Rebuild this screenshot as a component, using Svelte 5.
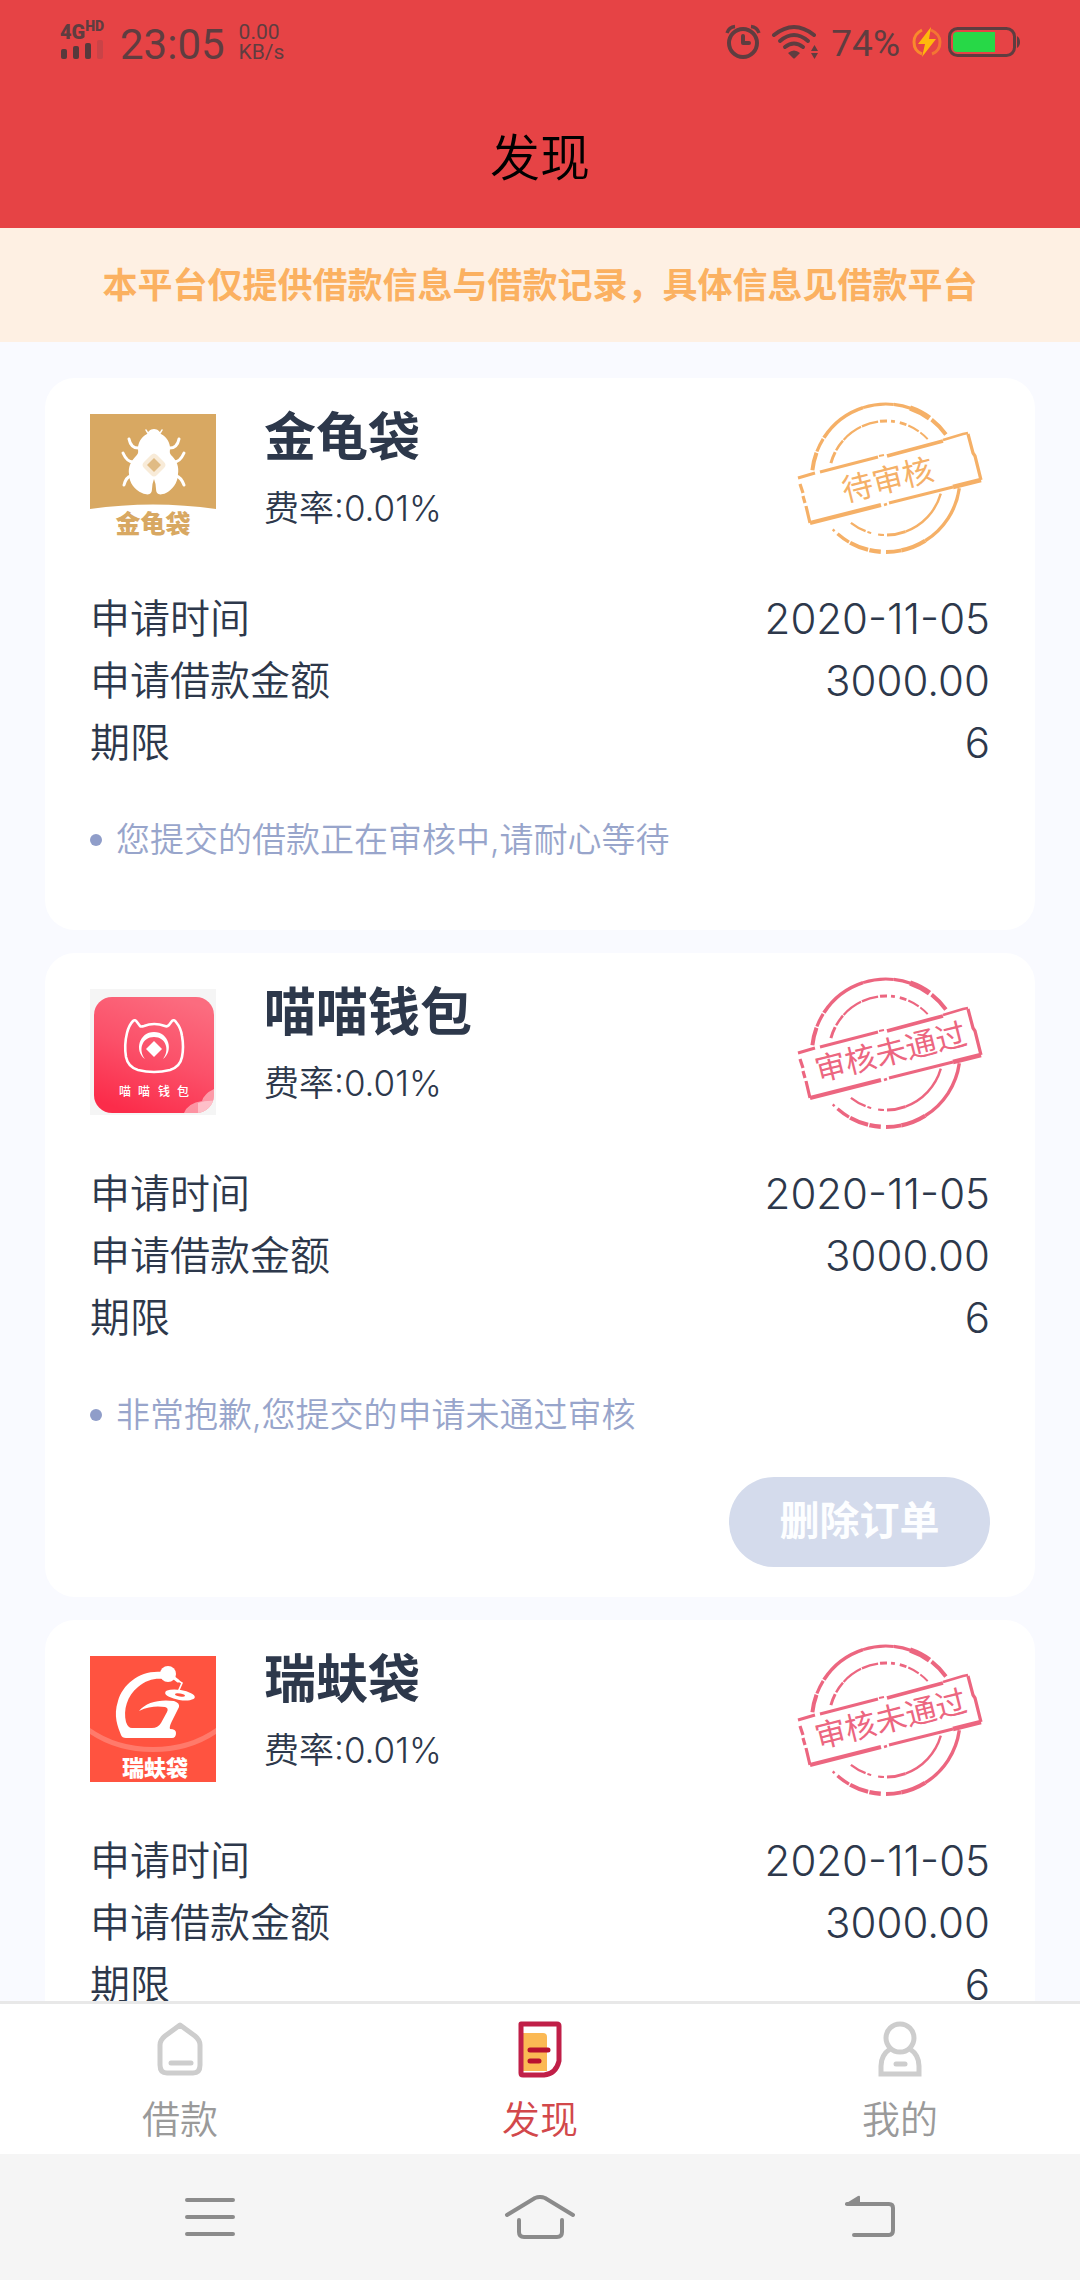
<script lang="ts">
  type Order = {
    name: string;
    logo: 'beetle' | 'cat' | 'lamp';
    rate: string;
    date: string;
    amount: string;
    term: number;
    status: 'pending' | 'rejected';
    note?: string;
    removable?: boolean;
  };

  const orders: Order[] = [
    {
      name: '金龟袋',
      logo: 'beetle',
      rate: '0.01%',
      date: '2020-11-05',
      amount: '3000.00',
      term: 6,
      status: 'pending',
      note: '您提交的借款正在审核中,请耐心等待'
    },
    {
      name: '喵喵钱包',
      logo: 'cat',
      rate: '0.01%',
      date: '2020-11-05',
      amount: '3000.00',
      term: 6,
      status: 'rejected',
      note: '非常抱歉,您提交的申请未通过审核',
      removable: true
    },
    {
      name: '瑞蚨袋',
      logo: 'lamp',
      rate: '0.01%',
      date: '2020-11-05',
      amount: '3000.00',
      term: 6,
      status: 'rejected'
    }
  ];

  const stampText = { pending: '待审核', rejected: '审核未通过' };

  // worn ring segments: radius, start angle, end angle, stroke width
  const segments = [
    [74, 186, 200, 4], [74, 201, 212, 3.2], [74, 213, 252, 3.6], [74, 252, 276, 3], [74, 276, 290, 3.4],
    [74, 289, 306, 5.4], [74, 308, 324, 4],
    [74, 8, 58, 3.4], [74, 58, 78, 4.2], [74, 78, 90, 3.8], [74, 94, 103, 4.4], [74, 104, 119, 4],
    [74, 120, 131, 3.4], [74, 134, 136, 2.4],
    [57, 195, 207, 3], [57, 209, 221, 2.4], [57, 222, 244, 2.2], [57, 245, 262, 2.4], [57, 264, 271, 3],
    [57, 275, 279, 2.8], [57, 284, 291, 2.8], [57, 293, 305, 2.2], [57, 307, 317, 2],
    [57, 16, 70, 2.4], [57, 70, 89, 3], [57, 92, 98, 2], [57, 105, 109, 2], [57, 111, 128, 2.4]
  ];

  function arc(r: number, from: number, to: number) {
    const at = (deg: number) => {
      const a = (deg * Math.PI) / 180;
      return `${(91 + r * Math.cos(a)).toFixed(1)} ${(78 + r * Math.sin(a)).toFixed(1)}`;
    };
    return `M${at(from)}A${r} ${r} 0 0 1 ${at(to)}`;
  }
</script>

{#snippet stamp(status: Order['status'])}
  <svg class="stamp {status}" viewBox="0 0 195 160" role="img" aria-label={stampText[status]}>
    {#each segments as [r, from, to, w]}
      <path d={arc(r, from, to)} stroke-width={w} />
    {/each}
    <path class="plate" d="M4 77 172 33 186 80 16 124z" />
    <path stroke-width="3" d="M3 78 20 73M25 72 83 57" />
    <path stroke-width="2" d="M84 56 89 55" />
    <path stroke-width="3.8" d="M92 56 148 41" />
    <path stroke-width="2.6" d="M148 40 168 34 173 33" />
    <path stroke-width="3.2" d="M173 34 178 53 180 56 186 80" />
    <path stroke-width="4.4" d="M186 80 158 87" />
    <path stroke-width="3.2" d="M158 87 94 103" />
    <path stroke-width="2.4" d="M89 105 92 104" />
    <path stroke-width="4.2" d="M86 105 15 123" />
    <path stroke-width="3.2" d="M15 123 11 106M10 103 8 96M8 93 5 84" />
    <text
      x={status === 'pending' ? 93 : 96}
      y={status === 'pending' ? 91 : 88}
      transform="rotate(-14 {status === 'pending' ? '93 81' : '96 78'})">{stampText[status]}</text>
  </svg>
{/snippet}

{#snippet logo(kind: Order['logo'])}
  {#if kind === 'beetle'}
    <svg class="logo" viewBox="0 0 126 126">
      <path fill="#d8a862" d="M0 0H126V95Q63 86 0 95z" />
      <g fill="none" stroke="#fff" stroke-width="3" stroke-linecap="round">
        <path d="M39 25Q41 35 50 34M89 25Q87 35 78 34M33 39Q37 48 43 48M94 39Q90 48 84 48M34 71Q36 63 41 62M94 71Q91 63 86 62" />
        <path stroke-width="1.5" d="M56 16Q57 19 60 20M72 16Q71 19 68 20" />
      </g>
      <path
        fill="#fff"
        d="M64 15C68 15 70 18 71 20C77 23 80 29 80 34C80 38 79 39 82 42C87 47 89 53 88 60C88 69 82 76 76 79C69 82 66 80 66 75Q66 70 64 65Q62 70 62 75C62 80 59 82 52 79C45 76 39 69 39 60C38 53 41 47 46 42C49 39 48 38 48 34C48 29 51 23 57 20C58 18 60 15 64 15z" />
      <path fill="#f8ebd8" d="M61 41Q64 38 67 41L74 48Q77 51 74 54L67 61Q64 64 61 61L54 54Q51 51 54 48z" />
      <path fill="#e0bb84" d="M64 44 71 51 64 58 57 51z" />
      <text x="63" y="119" font-size="25" font-weight="900" fill="#d8a862">金龟袋</text>
    </svg>
  {:else if kind === 'cat'}
    <svg class="logo" viewBox="0 0 126 126">
      <defs>
        <linearGradient id="catBg" x1="0.7" y1="0" x2="0.3" y2="1">
          <stop offset="0" stop-color="#fb6c7f" />
          <stop offset="0.5" stop-color="#fb5069" />
          <stop offset="1" stop-color="#fb2c4a" />
        </linearGradient>
        <clipPath id="catClip"><rect x="4" y="8" width="120" height="116" rx="18" /></clipPath>
      </defs>
      <path fill="#f5f5f5" d="M0 0H126V126H0z" />
      <g clip-path="url(#catClip)">
        <path fill="url(#catBg)" d="M4 8H124V124H4z" />
        <path fill="#fff" fill-opacity="0.45" d="M94 124Q98 114 112 112Q114 104 126 99V124z" />
        <path fill="#fff" fill-opacity="0.4" d="M108 124V114Q116 111 126 112V124z" />
      </g>
      <path
        fill="none"
        stroke="#fff"
        stroke-width="2.6"
        stroke-linejoin="round"
        d="M37 44Q39 36 43 32Q45 30 47 33L50 37Q51 38 54 37Q64 33 75 37Q77 38 79 36L82 32Q84 30 86 33Q91 39 92 47Q94 58 92 68Q90 78 80 81Q64 85 48 81Q38 78 36 68Q34 56 37 44z" />
      <path fill="#fff" d="M55 70C44 62 49 43 64 43C79 43 84 62 73 70C80 61 76 48 64 48C52 48 48 61 55 70z" />
      <path fill="#fff" d="M64 52 72 60 64 68 56 60z" />
      <g font-size="12" font-weight="500" fill="#fff">
        <text x="35" y="107">喵</text>
        <text x="54" y="107">喵</text>
        <text x="74" y="107">钱</text>
        <text x="93" y="107">包</text>
      </g>
    </svg>
  {:else}
    <svg class="logo" viewBox="0 0 126 126">
      <path fill="#ff5340" d="M0 0H126V126H0z" />
      <path fill="#ff7a6b" d="M0 72Q27 91 63 91Q99 91 126 72V78Q99 96 63 96Q27 96 0 78z" />
      <path
        fill="#fff"
        d="M72 16C50 14 33 28 28 45C23 60 28 71 31 79Q32 82 36 82L82 82Q86 82 86 77Q86 73 80 73Q79 71 82 65L89 51Q90 47 84 45C70 43 56 46 49 55C59 50 68 50 75 51Q79 52 77 56L71 67Q68 72 62 72L42 72Q38 72 36 66C33 54 37 40 48 31C56 24 65 22 73 23z" />
      <circle cx="78" cy="18" r="8" fill="#fff" />
      <path fill="none" stroke="#fff" stroke-width="3" stroke-linecap="round" d="M83 21 88 25" />
      <path fill="none" stroke="#fff" stroke-width="1.6" stroke-linecap="round" d="M87 24 92 27 88 36" />
      <ellipse cx="90" cy="39" rx="15" ry="5" transform="rotate(9 90 39)" fill="#fff" />
      <ellipse cx="90" cy="39" rx="5" ry="1.4" transform="rotate(9 90 39)" fill="#ff5340" />
      <text x="65" y="120" font-size="22" font-weight="900" fill="#fff">瑞蚨袋</text>
    </svg>
  {/if}
{/snippet}

<div class="screen">
  <header>
    <div class="status-bar">
      <div class="signal">
        <span class="network">4G<sup>HD</sup></span>
        <svg width="44" height="20" viewBox="0 0 44 20" aria-hidden="true">
          <g fill="#57393c">
            <rect x="1" y="9" width="6" height="10" rx="2" />
            <rect x="13" y="6" width="6" height="13" rx="2" />
            <rect x="25" y="3" width="6" height="16" rx="2" />
          </g>
          <rect x="37" y="0" width="6" height="19" rx="2" fill="#c94347" />
        </svg>
      </div>
      <span class="clock">23:05</span>
      <span class="speed">0.00<br />KB/s</span>
      <div class="status-right">
        <svg width="36" height="36" viewBox="0 0 36 36" fill="none" stroke="#5f3d40" aria-hidden="true">
          <circle cx="18" cy="19" r="14" stroke-width="4" />
          <path stroke-width="4" stroke-linejoin="round" stroke-linecap="round" d="M18 12V19H24" />
          <path stroke-width="3.4" d="M2 9Q4 3 10 2.500M34 9Q32 3 26 2.500" />
        </svg>
        <svg class="wifi" width="48" height="36" viewBox="0 0 48 36" fill="none" stroke="#5f3d40" aria-hidden="true">
          <g stroke-width="4" stroke-linecap="round">
            <path d="M3 11Q23-5 43 11" />
            <path d="M9 17Q23 5 37 17" />
            <path d="M14 23Q23 16 32 23" />
          </g>
          <path fill="#5f3d40" stroke="none" d="M17 29Q23 24 29 29L24 34Q23 35 22 34zM40 27 43.500 21 47 27zM40 29 43.500 35 47 29z" />
        </svg>
        <span class="percent">74%</span>
        <svg class="bolt" width="30" height="30" viewBox="0 0 30 30" aria-hidden="true">
          <path fill="none" stroke="#f98a2c" stroke-width="3" d="M10 3Q2 7 2 15Q2 24 10 27" />
          <path fill="none" stroke="#f98a2c" stroke-width="3" d="M19 3Q28 7 28 15Q28 24 20 27" opacity="0.7" />
          <path fill="#ffb80c" d="M19 0 6 17H13L10 30 24 12H17z" />
        </svg>
        <svg width="72" height="30" viewBox="0 0 72 30" aria-hidden="true">
          <rect x="1.500" y="1.500" width="65" height="27" rx="8" fill="none" stroke="#5f3d40" stroke-width="3" />
          <path fill="#27d847" d="M9 5H47V25H9Q5 25 5 21V9Q5 5 9 5z" />
          <path fill="#5f3d40" d="M69 9Q72 11 72 15Q72 19 69 21z" />
        </svg>
      </div>
    </div>
    <h1>发现</h1>
  </header>

  <p class="notice">本平台仅提供借款信息与借款记录，具体信息见借款平台</p>

  <main>
    {#each orders as order}
      <article class="card" class:removable={order.removable}>
        <div class="card-head">
          {@render logo(order.logo)}
          <div class="title">
            <h2>{order.name}</h2>
            <p>费率:{order.rate}</p>
          </div>
          {@render stamp(order.status)}
        </div>
        <dl>
          <div><dt>申请时间</dt><dd>{order.date}</dd></div>
          <div><dt>申请借款金额</dt><dd>{order.amount}</dd></div>
          <div><dt>期限</dt><dd>{order.term}</dd></div>
        </dl>
        {#if order.note}
          <p class="note">{order.note}</p>
        {/if}
        {#if order.removable}
          <button class="delete">删除订单</button>
        {/if}
      </article>
    {/each}
  </main>

  <nav class="tabs">
    <a href="#loan">
      <svg width="60" height="60" viewBox="0 0 60 60" fill="none" stroke="#cdcdcd" stroke-width="5" stroke-linecap="round" stroke-linejoin="round" aria-hidden="true">
        <path d="M30 6 45 17Q50 21 50 26V46Q50 54 43 54H17Q10 54 10 46V26Q10 21 15 17z" />
        <path d="M21 44H41" />
      </svg>
      <span>借款</span>
    </a>
    <a href="#discover" class="active" aria-current="page">
      <svg width="60" height="60" viewBox="0 0 60 60" fill="none" aria-hidden="true">
        <path fill="#fbb954" d="M12 14H33Q37 14 37 18V52H12z" />
        <g stroke="#c01f48" stroke-width="5" stroke-linecap="round" stroke-linejoin="round">
          <path d="M11 5H47Q49 5 49 7V42Q46 55 34 56H13Q11 56 11 54z" />
          <path stroke="#b8102f" d="M20 31H38M20 42H29" />
        </g>
      </svg>
      <span>发现</span>
    </a>
    <a href="#mine">
      <svg width="60" height="60" viewBox="0 0 60 60" fill="none" stroke="#cdcdcd" stroke-width="5" aria-hidden="true">
        <circle cx="30" cy="19" r="14" />
        <path d="M20 30Q11 36 11 47V55H49V47Q49 36 40 30" />
        <path stroke-linecap="round" d="M26 45H35" />
      </svg>
      <span>我的</span>
    </a>
  </nav>

  <nav class="system-nav">
    <button aria-label="菜单">
      <svg width="50" height="44" viewBox="0 0 50 44"><path d="M2 5H48M2 22H48M2 39H48" /></svg>
    </button>
    <button aria-label="主页">
      <svg width="72" height="44" viewBox="0 0 72 44">
        <path d="M3 20 31 3Q36 1 41 3L69 20M15 25V37Q15 42 20 42H53Q58 42 58 37V25" />
      </svg>
    </button>
    <button aria-label="返回">
      <svg width="52" height="44" viewBox="0 0 52 44">
        <path d="M3 9H45Q49 9 49 13V35Q49 40 45 40H10" />
        <path class="solid" d="M1 9 14 1Q16 0 16 2V10H1z" />
      </svg>
    </button>
  </nav>
</div>

<style>
  :global(body) {
    margin: 0;
  }

  .screen {
    display: flex;
    flex-direction: column;
    height: 100vh;
    overflow: hidden;
    background: #f9faff;
    color: #2d384b;
    font-family: Inter, "Noto Sans CJK SC", sans-serif;
    font-weight: 350;
  }

  h1, h2, p, dl, dd {
    margin: 0;
  }

  header {
    background: #e64345;
  }

  .status-bar {
    display: flex;
    align-items: center;
    height: 84px;
    padding: 0 60px;
    color: #5f3d40;
    font-family: Roboto, sans-serif;
    font-weight: 400;
  }

  .signal {
    display: flex;
    flex-direction: column;
    width: 46px;
    margin-right: 14px;
  }

  .network {
    font-size: 20px;
    font-weight: 900;
    line-height: 16px;
    white-space: nowrap;
  }

  .network sup {
    font-size: 14px;
    line-height: 0;
  }

  .clock {
    margin-right: 14px;
    padding-top: 6px;
    font-size: 42px;
    line-height: 48px;
  }

  .speed {
    font-size: 21px;
    line-height: 20px;
  }

  .status-right {
    display: flex;
    align-items: center;
    margin-left: auto;
  }

  .wifi {
    margin: 0 12px 0 10px;
  }

  .percent {
    padding-top: 4px;
    font-size: 37px;
    line-height: 40px;
  }

  .bolt {
    margin: 0 6px 0 12px;
  }

  h1 {
    padding-top: 4px;
    color: #000;
    font-size: 50px;
    font-weight: 350;
    line-height: 140px;
    text-align: center;
  }

  .notice {
    background: #fef0e3;
    color: #fbb161;
    font-size: 35px;
    font-weight: 700;
    line-height: 114px;
    text-align: center;
    white-space: nowrap;
  }

  main {
    flex: 1;
    display: flex;
    flex-direction: column;
    gap: 23px;
    min-height: 0;
    padding: 36px 45px 0;
    overflow: hidden;
  }

  .card {
    display: flex;
    flex-direction: column;
    flex-shrink: 0;
    padding: 22px 45px 60px;
    border-radius: 30px;
    background: #fff;
  }

  .removable {
    padding-bottom: 30px;
  }

  .card-head {
    display: flex;
    align-items: flex-start;
    margin-bottom: 28px;
  }

  .logo {
    width: 126px;
    height: 126px;
    margin: 14px 48px 0 0;
  }

  .logo text,
  .stamp text {
    font-family: "Noto Sans CJK SC", sans-serif;
    text-anchor: middle;
  }

  h2 {
    font-size: 52px;
    font-weight: 700;
    line-height: 76px;
  }

  .title p {
    margin-top: 8px;
    font-size: 35px;
    line-height: 48px;
  }

  .stamp {
    width: 195px;
    height: 160px;
    margin-left: auto;
    fill: none;
    stroke: currentColor;
  }

  .stamp.pending {
    color: #f5b067;
  }

  .stamp.rejected {
    color: #ec6680;
  }

  .stamp .plate {
    fill: #fff;
    stroke: none;
  }

  .stamp text {
    fill: currentColor;
    stroke: none;
    font-size: 31px;
    font-weight: 400;
  }

  dl div {
    display: flex;
    justify-content: space-between;
    line-height: 62px;
  }

  dt {
    font-size: 40px;
  }

  dd {
    font-size: 42px;
  }

  .note {
    display: flex;
    align-items: center;
    gap: 14px;
    margin-top: 36px;
    color: #98a5cb;
    font-size: 34px;
    line-height: 60px;
  }

  .note::before {
    content: "";
    width: 12px;
    height: 12px;
    border-radius: 50%;
    background: #8f9dc9;
  }

  .delete {
    align-self: flex-end;
    width: 261px;
    height: 90px;
    margin-top: 32px;
    padding: 0 0 8px;
    border: 0;
    border-radius: 45px;
    background: #d4dbec;
    color: #fdfeff;
    font-family: inherit;
    font-size: 40px;
    font-weight: 700;
  }

  .tabs {
    display: flex;
    height: 150px;
    border-top: 3px solid #e8e8e8;
    background: #fff;
  }

  .tabs a {
    flex: 1;
    display: flex;
    flex-direction: column;
    align-items: center;
    gap: 12px;
    padding-top: 15px;
    color: #9a9a9a;
    font-size: 38px;
    line-height: 56px;
    text-decoration: none;
  }

  .tabs .active {
    color: #d2484b;
  }

  .system-nav {
    display: flex;
    height: 126px;
    padding: 0 45px;
    background: #f5f5f5;
  }

  .system-nav button {
    flex: 1;
    display: flex;
    align-items: center;
    justify-content: center;
    padding: 0;
    border: 0;
    background: none;
  }

  .system-nav svg {
    fill: none;
    stroke: #8b8b8b;
    stroke-width: 4;
    stroke-linecap: round;
    stroke-linejoin: round;
  }

  .system-nav .solid {
    fill: #8b8b8b;
    stroke: none;
  }
</style>
